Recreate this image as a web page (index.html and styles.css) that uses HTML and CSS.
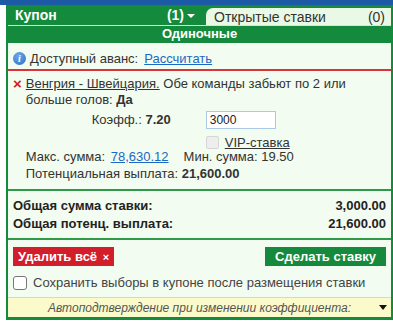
FILE: index.html
```html
<!DOCTYPE html>
<html lang="ru">
<head>
  <meta charset="UTF-8" />
  <meta name="viewport" content="width=device-width, initial-scale=1.0" />
  <title>Купон</title>
  <link rel="stylesheet" href="styles.css">
</head>
<body>
  <div class="topbar"></div>
  <div class="wrap">
    <div class="side"></div>
    <div class="coupon">
      <div class="tabs">
        <div class="tab tab-active">
          <span>Купон</span>
          <span class="count">(1) <span class="caret"></span></span>
        </div>
        <div class="tab tab-open">
          <span>Открытые ставки</span>
          <span>(0)</span>
        </div>
      </div>
      <div class="box">
        <div class="section-title">Одиночные</div>
        <div class="advance">
          <span class="info">i</span>
          <span>Доступный аванс:</span>
          <a href="#" class="link">Рассчитать</a>
        </div>
        <div class="bet">
          <span class="remove">×</span>
          <div class="bet-body">
            <p class="event"><a href="#" class="match">Венгрия - Швейцария.</a> Обе команды забьют по 2 или больше голов: <b>Да</b></p>
            <div class="stake-row">
              <span class="odds">Коэфф.: <b>7.20</b></span>
              <input class="stake" type="text" value="3000">
            </div>
            <label class="vip">
              <span class="vip-box"></span>
              <span class="vip-text">VIP-ставка</span>
            </label>
            <div class="limits">
              <span>Макс. сумма: <a href="#" class="link">78,630.12</a></span>
              <span>Мин. сумма: 19.50</span>
            </div>
            <div class="payout">Потенциальная выплата: <b>21,600.00</b></div>
          </div>
        </div>
        <div class="totals">
          <div class="total-row"><span>Общая сумма ставки:</span><span>3,000.00</span></div>
          <div class="total-row"><span>Общая потенц. выплата:</span><span>21,600.00</span></div>
        </div>
        <div class="actions">
          <button class="btn btn-red">Удалить всё <span class="x">×</span></button>
          <button class="btn btn-green">Сделать ставку</button>
        </div>
        <label class="keep">
          <span class="keep-box"></span>
          <span>Сохранить выборы в купоне после размещения ставки</span>
        </label>
        <div class="autoconfirm">
          <span>Автоподтверждение при изменении коэффициента:</span>
          <span class="arrow"></span>
        </div>
      </div>
    </div>
  </div>
</body>
</html>
```

FILE: styles.css
```css
* {
  margin: 0;
  padding: 0;
  box-sizing: border-box;
}
body {
  font-family: 'Liberation Sans', Arial, sans-serif;
  font-size: 13px;
  color: #333;
  background: #fff;
  width: 393px;
  height: 322px;
  overflow: hidden;
}
.topbar {
  height: 5px;
  background: #1d5aa6;
}
.wrap {
  display: flex;
}
.side {
  width: 6px;
  background: #fff;
}
.coupon {
  flex: 1;
  background: #138a3c;
  padding: 0 2px 3px 2px;
}
.tabs {
  display: flex;
  height: 21px;
  border-bottom: 1px solid #cfe9cf;
}
.tab {
  display: flex;
  justify-content: space-between;
  align-items: center;
  font-size: 14px;
}
.tab-active {
  width: 194px;
  padding: 0 7px 0 7px;
  color: #fff;
  font-weight: bold;
  border-top-right-radius: 8px;
}
.count {
  display: flex;
  align-items: center;
  gap: 3px;
}
.caret {
  width: 0;
  height: 0;
  border-left: 4px solid transparent;
  border-right: 4px solid transparent;
  border-top: 4px solid #fff;
  margin-top: 2px;
}
.tab-open {
  flex: 1;
  margin: 3px 0 0 4px;
  padding: 0 6px 0 8px;
  background: #e9f9e6;
  color: #333;
  border-top-left-radius: 7px;
}
.box {
  background: #f2fcf0;
}
.section-title {
  background: #138a3c;
  color: #fff;
  font-weight: bold;
  text-align: center;
  height: 17px;
  line-height: 16px;
}
.advance {
  display: flex;
  align-items: center;
  gap: 4px;
  height: 28px;
  padding: 4px 5px 0;
  border-bottom: 2px solid #d8343a;
}
.info {
  width: 13px;
  height: 13px;
  border-radius: 50%;
  background: radial-gradient(circle at 40% 30%, #6aa8ea, #2f6fc4);
  color: #fff;
  font: italic bold 10px 'Liberation Serif', serif;
  display: flex;
  align-items: center;
  justify-content: center;
}
.link {
  color: #1c69c4;
  margin-left: 2px;
}
.bet {
  display: flex;
  gap: 4px;
  padding: 5px 5px 7px;
  border-bottom: 2px solid #2e9a47;
  line-height: 16px;
}
.remove {
  color: #d52020;
  font-weight: bold;
  font-size: 15px;
}
.bet-body {
  flex: 1;
}
.match {
  color: #333;
}
.stake-row {
  display: flex;
  align-items: center;
  margin-top: 2px;
  padding-left: 66px;
  height: 19px;
}
.odds {
  width: 114px;
}
.stake {
  width: 70px;
  height: 18px;
  border: 1px solid #a9c9e4;
  background: #fff;
  font: 12px 'Liberation Sans', Arial, sans-serif;
  color: #222;
  padding: 0 3px;
}
.vip {
  display: flex;
  align-items: center;
  gap: 6px;
  padding-left: 180px;
  margin-top: 7px;
  height: 13px;
}
.vip-box {
  width: 13px;
  height: 13px;
  border: 1px solid #d6d6d6;
  border-radius: 2px;
  background: #eee;
}
.vip-text {
  text-decoration: underline;
}
.limits {
  display: flex;
  gap: 15px;
}
.payout {
  margin-top: 1px;
}
.totals {
  padding: 6px 5px 5px;
  border-bottom: 2px solid #2e9a47;
  font-weight: bold;
  color: #222;
}
.total-row {
  display: flex;
  justify-content: space-between;
  line-height: 18px;
}
.actions {
  display: flex;
  justify-content: space-between;
  padding: 7px 5px 0;
}
.btn {
  border: none;
  font: bold 13px 'Liberation Sans', Arial, sans-serif;
  color: #fff;
  height: 19px;
  padding: 0 10px;
}
.btn-red {
  background: #d21d2a;
  padding: 0 5px;
}
.x {
  font-size: 11px;
  margin-left: 2px;
}
.btn-green {
  background: #168a3c;
}
.keep {
  display: flex;
  align-items: center;
  gap: 6px;
  padding: 2px 5px 0;
  height: 31px;
  color: #444;
}
.keep-box {
  width: 14px;
  height: 14px;
  border: 1px solid #777;
  border-radius: 3px;
  background: #fff;
}
.autoconfirm {
  display: flex;
  align-items: center;
  justify-content: center;
  position: relative;
  height: 20px;
  background: #fafacb;
  border-top: 1px solid #d7dcb0;
  font-size: 12px;
  font-style: italic;
  color: #555;
}
.arrow {
  position: absolute;
  right: 4px;
  top: 7px;
  border-left: 4px solid transparent;
  border-right: 4px solid transparent;
  border-top: 5px solid #111;
}
```
